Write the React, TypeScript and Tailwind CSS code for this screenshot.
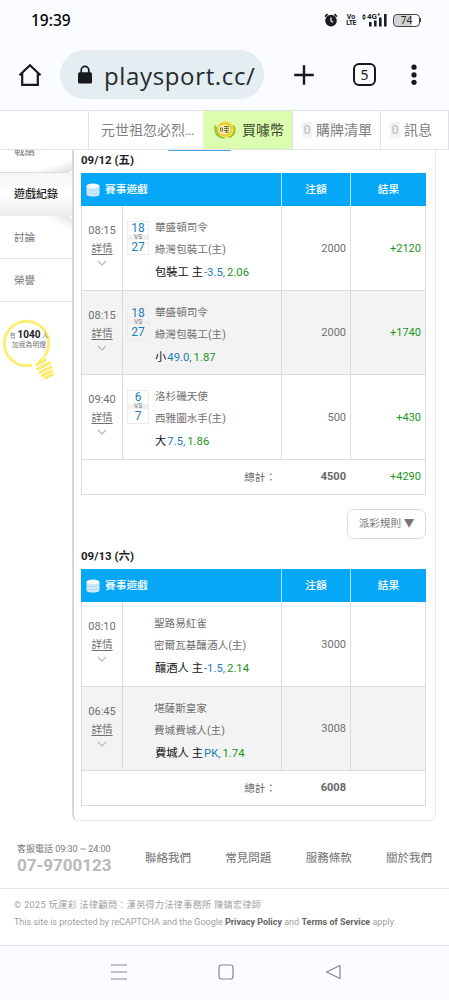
import React from "react";

interface Game {
  time: string;
  score?: [string, string];
  away: string;
  home: string;
  pick: string;
  line: string;
  odds: string;
  stake: string;
  result?: string;
}

interface Day {
  label: string;
  games: Game[];
  total: string;
  totalResult?: string;
}

const firstDay: Day = {
  label: "09/12 (五)",
  games: [
    {
      time: "08:15",
      score: ["18", "27"],
      away: "華盛頓司令",
      home: "綠灣包裝工(主)",
      pick: "包裝工 主",
      line: "-3.5",
      odds: "2.06",
      stake: "2000",
      result: "+2120",
    },
    {
      time: "08:15",
      score: ["18", "27"],
      away: "華盛頓司令",
      home: "綠灣包裝工(主)",
      pick: "小",
      line: "49.0",
      odds: "1.87",
      stake: "2000",
      result: "+1740",
    },
    {
      time: "09:40",
      score: ["6", "7"],
      away: "洛杉磯天使",
      home: "西雅圖水手(主)",
      pick: "大",
      line: "7.5",
      odds: "1.86",
      stake: "500",
      result: "+430",
    },
  ],
  total: "4500",
  totalResult: "+4290",
};

const secondDay: Day = {
  label: "09/13 (六)",
  games: [
    {
      time: "08:10",
      away: "聖路易紅雀",
      home: "密爾瓦基釀酒人(主)",
      pick: "釀酒人 主",
      line: "-1.5",
      odds: "2.14",
      stake: "3000",
    },
    {
      time: "06:45",
      away: "堪薩斯皇家",
      home: "費城費城人(主)",
      pick: "費城人 主",
      line: "PK",
      odds: "1.74",
      stake: "3008",
    },
  ],
  total: "6008",
};

function StatusBar() {
  return (
    <div className="flex h-10 items-center justify-between pl-[31px] pr-[28px]">
      <span className="mt-[2px] font-['Noto_Sans'] text-[15.5px] font-medium text-black">
        19:39
      </span>
      <div className="flex items-center">
        <svg width="14" height="14" viewBox="0 0 14 14">
          <circle cx="7" cy="7.6" r="5.8" fill="#1b1c1e" />
          <path d="M1 3.6 3.6 1.2M13 3.6 10.4 1.2" stroke="#1b1c1e" strokeWidth="1.6" />
          <path d="M7 4.6V8l2 1.2" stroke="#fff" strokeWidth="1.2" fill="none" />
        </svg>
        <div className="ml-[8px] flex w-[10px] flex-col items-center text-[7px] font-bold leading-[6.5px] text-[#1b1c1e]">
          <span>Vo</span>
          <span className="tracking-[-0.6px]">LTE</span>
        </div>
        <div className="relative ml-[6px] h-[14px] w-[25px]">
          <svg width="25" height="14" viewBox="0 0 25 14" fill="#1b1c1e">
            <path d="M0 3.400 2 1l2 2.400zM0 4.600h4L2 7z" />
            <rect x="7" y="9" width="2.600" height="4.500" />
            <rect x="12" y="7.500" width="2.600" height="6" />
            <rect x="17" y="4.500" width="2.600" height="9" />
            <rect x="22" y="1" width="2.600" height="12.500" />
          </svg>
          <span className="absolute left-[5px] top-0 text-[8px] font-bold leading-[7px] text-[#1b1c1e]">
            4G<sup className="text-[6px]">+</sup>
          </span>
        </div>
        <div className="ml-[6px] flex items-center">
          <div className="flex h-[13px] w-[27px] items-center justify-center rounded-[4px] border border-[#444] bg-linear-to-r from-[#d2d3d5] from-70% to-white to-70% font-['Noto_Sans'] text-[10px] leading-none text-[#222]">
            74
          </div>
          <div className="h-[4px] w-[1px] bg-[#444]" />
        </div>
      </div>
    </div>
  );
}

function BrowserBar() {
  return (
    <div className="flex h-[70px] items-start pt-[10px]">
      <svg className="ml-[18px] mt-[13px]" width="24" height="24" viewBox="0 0 24 24">
        <path
          d="M1.500 12.300 12 2.200l10.500 10.100M4.200 10.500v11.300h15.600V10.500"
          fill="none"
          stroke="#17191b"
          strokeWidth="2.200"
        />
      </svg>
      <div className="ml-[18px] flex h-[49px] w-[204px] items-center overflow-hidden rounded-full bg-[#e4edf1] pl-[17px]">
        <svg width="16" height="20" viewBox="0 0 16 20" className="shrink-0">
          <rect x="1" y="7.300" width="14" height="11.200" rx="1.600" fill="#17191b" />
          <path d="M4.200 8V5.200a3.800 3.800 0 0 1 7.600 0V8" fill="none" stroke="#17191b" strokeWidth="1.700" />
        </svg>
        <div className="ml-[11px] mt-[2px] w-[151px] overflow-hidden whitespace-nowrap font-['Open_Sans'] text-[24px] leading-[40px] tracking-[0.650px] text-[#252b2e]">
          playsport.cc/
        </div>
      </div>
      <svg className="ml-[30px] mt-[14px]" width="20" height="22" viewBox="0 0 20 22">
        <path d="M10 1.200v19.600M0.200 11h19.600" stroke="#17191b" strokeWidth="2.400" />
      </svg>
      <div className="ml-[39px] mt-[13px] flex h-[23px] w-[23px] items-center justify-center rounded-[6px] border-2 border-[#17191b] font-['Noto_Sans'] text-[14px] leading-none text-[#17191b]">
        5
      </div>
      <svg className="ml-[34px] mt-[14px]" width="8" height="22" viewBox="0 0 8 22" fill="#17191b">
        <circle cx="4" cy="3.200" r="2.600" />
        <circle cx="4" cy="10.900" r="2.600" />
        <circle cx="4" cy="18.300" r="2.600" />
      </svg>
    </div>
  );
}

function CoinIcon() {
  return (
    <svg width="24" height="20" viewBox="0 0 24 20" className="shrink-0">
      <path d="M1 5c2.500.5 4 3 4.500 7l3 5.500C3.500 17 .8 12 1 5z" fill="#9cc63a" />
      <path d="M20 4.500c3 1.500 3.300 6 1.500 9.500-1.500 2.600-4 4-6.500 4l3-5z" fill="#8dbb35" />
      <ellipse cx="12.500" cy="9.500" rx="8.600" ry="8" fill="#f3d836" />
      <ellipse cx="11.500" cy="9.500" rx="6.600" ry="5.600" fill="#f7efb0" stroke="#dfba2b" strokeWidth=".9" />
      <path
        d="M7.500 8h2v3h-2zM11 6.500h5M11 8.500h5M10.800 10.500h5.200M12 12.500l3.500-.5M13.300 6.500v6"
        stroke="#6b6a2c"
        strokeWidth=".9"
        fill="none"
      />
      <path d="M2.500 13c2.500 3.600 5.500 5 9 5.200" stroke="#7db32f" strokeWidth="1.200" fill="none" />
    </svg>
  );
}

function SiteNav() {
  return (
    <div className="flex h-10 border-y border-[#dfe3e8] bg-white text-[14px] leading-[38px] text-[#7f7f7f] whitespace-nowrap">
      <div className="w-[88px]" />
      <div className="w-[115px] border-l border-[#dfe3e8] pl-[12px]">
        元世祖忽必烈<span className="tracking-[-0.700px]">...</span>
      </div>
      <div className="flex w-[89px] items-center bg-[#dcfcb0] pl-[10px] text-[#3c4a2c]">
        <CoinIcon />
        <span className="ml-[5px]">買噱幣</span>
      </div>
      <div className="flex w-[88px] items-center border-l border-[#dfe3e8] pl-[9px]">
        <span className="h-[16px] w-[10px] bg-[#f3f3f3] text-center text-[12px] leading-[16px] text-[#b5b5b5]">0</span>
        <span className="ml-[4px]">購牌清單</span>
      </div>
      <div className="flex w-[69px] items-center border-x border-[#dfe3e8] pl-[9px]">
        <span className="h-[16px] w-[10px] bg-[#f3f3f3] text-center text-[12px] leading-[16px] text-[#b5b5b5]">0</span>
        <span className="ml-[4px]">訊息</span>
      </div>
    </div>
  );
}

function Bulb() {
  return (
    <div className="relative mt-[15px] h-[64px] w-[60px]">
      <svg width="60" height="64" viewBox="0 0 60 64">
        <path
          d="M32 48A22.200 22.200 0 1 1 45.500 38"
          fill="none"
          stroke="#fbee72"
          strokeWidth="3"
        />
        <path d="M46.500 36A22 22 0 0 1 38 45" fill="none" stroke="#fbee72" strokeWidth="2" />
        <path
          d="M36.500 48l9-5M37.500 52l12-6M40 55.500l11-5.500M42.500 58.500l9.500-4.500M45 61l7.500-3.500"
          stroke="#faeb6a"
          strokeWidth="2.800"
          strokeLinecap="round"
        />
      </svg>
      <div className="absolute left-[5px] top-[12px] w-[48px] text-center text-[6.500px] leading-[12px] text-[#888] whitespace-nowrap">
        有 <b className="text-[10px] text-[#222]">1040</b> 人
      </div>
      <div className="absolute left-[5px] top-[23px] w-[48px] text-center text-[6.800px] leading-[11px] text-[#777] whitespace-nowrap">
        加我為明燈
      </div>
    </div>
  );
}

function Sidebar() {
  return (
    <aside className="w-[72px] shrink-0 text-[10.600px] text-[#777]">
      <div className="flex h-[23px] overflow-hidden rounded-br-[5px] border-b border-[#dcdcdc] bg-linear-to-br from-white from-70% to-[#dedede] pl-[14px]">
        <span className="mt-[-5px] leading-[14px]">戰績</span>
      </div>
      <div className="h-[43px] bg-linear-to-b from-[#f6f6f6] via-white via-50% to-[#ededed] pl-[14px] text-[11px] font-medium leading-[44px] text-[#222] whitespace-nowrap">
        遊戲紀錄
      </div>
      <div className="h-[43px] rounded-tr-[5px] border-b border-[#dedede] bg-linear-to-bl from-[#e2e2e2] to-white to-20% pl-[14px] leading-[43px]">
        討論
      </div>
      <div className="h-[43px] border-b border-[#dedede] pl-[14px] leading-[43px]">
        榮譽
      </div>
      <Bulb />
    </aside>
  );
}

function GameRow({ game, index }: { game: Game; index: number }) {
  return (
    <div
      className={`grid grid-cols-[41px_159px_69px_74px] border-b border-[#dcdcdc] ${
        index % 2 === 0 ? "h-[85px] bg-white" : "h-[84px] bg-[#f3f3f3]"
      }`}
    >
      <div className="flex flex-col items-center border-r border-[#dcdcdc] pt-[16px] text-[11px] leading-[18px] text-[#6f6f6f]">
        <span>{game.time}</span>
        <span className="text-[10.600px] underline underline-offset-2">詳情</span>
        <svg className="mt-[2px]" width="10" height="7" viewBox="0 0 10 7">
          <path d="M1 1l4 4 4-4" fill="none" stroke="#bdbdbd" strokeWidth="1.400" />
        </svg>
      </div>
      <div className="flex border-r border-[#dcdcdc]">
        {game.score && (
          <div className="ml-[4px] mt-[15px] flex h-[34px] w-[22px] flex-col items-center border border-[#ededed] text-[12px] text-[#1c7cbc]">
            <span className="leading-[13px]">{game.score[0]}</span>
            <span className="h-[6px] w-full bg-[#f0f0f0] text-center text-[6.500px] leading-[5px] text-[#777]">
              VS
            </span>
            <span className="leading-[15px]">{game.score[1]}</span>
          </div>
        )}
        <div
          className={`pt-[11px] text-[10.600px] leading-[22.400px] text-[#707070] whitespace-nowrap ${
            game.score ? "ml-[6px]" : "ml-[31px]"
          }`}
        >
          <div>{game.away}</div>
          <div>{game.home}</div>
          <div className={game.score ? "text-[11.300px] text-[#111]" : "pl-[1px] text-[11.300px] text-[#111]"}>
            {game.pick}
            <span className="ml-[1px] text-[#1c7cbc]">{game.line},</span>
            <span className="ml-[2px] text-[#1c951c]">{game.odds}</span>
          </div>
        </div>
      </div>
      <div className="flex items-center justify-end border-r border-[#dcdcdc] pr-[4px] pt-[2px] text-[11px] text-[#707070]">
        {game.stake}
      </div>
      <div className="flex items-center justify-end pr-[4px] pt-[2px] text-[11px] text-[#1c951c]">
        {game.result}
      </div>
    </div>
  );
}

function DayTable({ day }: { day: Day }) {
  return (
    <section>
      <h2 className="h-[24px] text-[11.500px] font-bold leading-[23px] text-[#222]">
        {day.label}
      </h2>
      <div className="w-[345px] border-x border-[#dcdcdc]">
        <div className="mx-[-1px] grid h-[33px] grid-cols-[201px_69px_75px] bg-[#06a7f7] text-[10.700px] font-medium leading-[34px] text-white">
          <div className="flex items-center border-r border-[#b9e3fa] pl-[5px]">
            <svg width="14" height="14" viewBox="0 0 14 14">
              <path d="M0.500 2.800v8.400C.5 12.700 3.500 13.500 7 13.500s6.500-.8 6.500-2.300V2.800z" fill="#cfe9f7" />
              <path d="M.5 6.200c2 1.500 11 1.500 13 0M.5 9.600c2 1.500 11 1.500 13 0" fill="none" stroke="#a6d6ef" strokeWidth=".8" />
              <ellipse cx="7" cy="2.900" rx="6.500" ry="2.300" fill="#f4fbff" />
            </svg>
            <span className="ml-[5px]">賽事遊戲</span>
          </div>
          <div className="border-r border-[#b9e3fa] text-center">注額</div>
          <div className="text-center">結果</div>
        </div>
        {day.games.map((game, i) => (
          <GameRow key={i} game={game} index={i} />
        ))}
        <div className="grid h-[35px] grid-cols-[200px_69px_74px] items-center border-b border-[#dcdcdc] pt-[1px] text-right text-[11px] text-[#666]">
          <span className="pr-[6px] text-[10.600px]">總計：</span>
          <b className="pr-[5px]">{day.total}</b>
          <span className="pr-[4px] text-[#1c951c]">{day.totalResult}</span>
        </div>
      </div>
    </section>
  );
}

function Footer() {
  return (
    <footer className="bg-white">
      <div className="flex h-[67px] items-center border-b border-[#e5e5e5] pt-[8px]">
        <div className="w-[145px] pl-[17px]">
          <div className="text-[9px] leading-[12px] text-[#777] whitespace-nowrap">
            客服電話 09:30 ~ 24:00
          </div>
          <div className="text-[17px] font-bold leading-[20px] text-[#b9b9b9]">
            07-9700123
          </div>
        </div>
        <nav className="flex w-[287px] justify-between text-[11.500px] text-[#707070]">
          <span>聯絡我們</span>
          <span>常見問題</span>
          <span>服務條款</span>
          <span>關於我們</span>
        </nav>
      </div>
      <div className="h-[56px] pl-[14px] pt-[8px] text-[9px] leading-[17px] text-[#a0a0a0] whitespace-nowrap">
        <p className="tracking-[0.420px]">
          © 2025 玩運彩 法律顧問：漢英得力法律事務所 陳鎮宏律師
        </p>
        <p>
          This site is protected by reCAPTCHA and the Google{" "}
          <b className="text-[#666]">Privacy Policy</b> and{" "}
          <b className="text-[#666]">Terms of Service</b> apply.
        </p>
      </div>
    </footer>
  );
}

function SystemNav() {
  return (
    <div className="grid h-[55px] grid-cols-[127px_1fr_124px] border-t border-[#dfe1e4] bg-[#fafcff]">
      <svg className="mt-[18px] justify-self-end" width="16" height="16" viewBox="0 0 16 16">
        <path d="M0 1h16M0 8h16M0 15h16" stroke="#85878a" strokeWidth="1.200" />
      </svg>
      <svg className="mt-[18px] justify-self-center" width="16" height="16" viewBox="0 0 16 16">
        <rect x="1" y="1" width="14" height="14" rx="2.500" fill="none" stroke="#85878a" strokeWidth="1.200" />
      </svg>
      <svg className="mt-[18px]" width="16" height="16" viewBox="0 0 16 16">
        <path d="M15 1.500v13L1.500 8z" fill="none" stroke="#85878a" strokeWidth="1.200" strokeLinejoin="round" />
      </svg>
    </div>
  );
}

export default function App() {
  return (
    <div className="flex h-[1000px] w-[449px] flex-col overflow-hidden bg-white font-[Roboto,'Noto_Sans_CJK_TC',sans-serif]">
      <div className="bg-[#fafcff]">
        <StatusBar />
        <BrowserBar />
      </div>
      <SiteNav />
      <div className="flex h-[672px]">
        <Sidebar />
        <main className="h-[671px] w-[364px] rounded-b-[6px] border-b border-l-2 border-r border-[#ebebeb] border-l-[#d9d9d9] bg-white pl-[7px]">
          <div className="ml-[87px] h-[1px] w-[63px] rounded-b bg-[#4aa9e0]" />
          <div className="mt-[-2px]">
            <DayTable day={firstDay} />
          </div>
          <div className="flex h-[50px] w-[345px] items-end justify-end pb-[6px]">
            <button className="h-[30px] w-[79px] rounded-[7px] border border-[#dcdcdc] text-[10.600px] text-[#777] whitespace-nowrap">
              派彩規則 ▼
            </button>
          </div>
          <DayTable day={secondDay} />
        </main>
      </div>
      <Footer />
      <SystemNav />
    </div>
  );
}
